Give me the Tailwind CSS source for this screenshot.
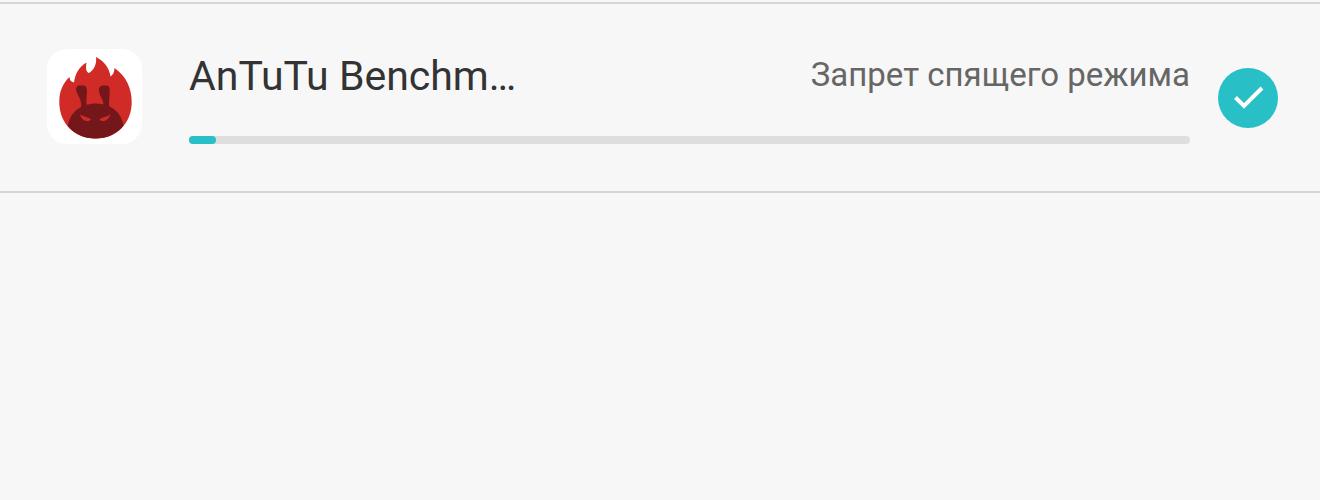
<!DOCTYPE html>
<html lang="ru">
<head>
    <meta charset="UTF-8">
    <meta name="viewport" content="width=device-width, initial-scale=1.0">
    <title>AnTuTu Benchmark</title>
    <script src="https://cdn.jsdelivr.net/npm/@tailwindcss/browser@4"></script>
</head>
<body class="min-h-screen bg-[#f7f7f7] pt-0.5 font-['Roboto',sans-serif]">
    <!-- App list -->
    <ul class="border-y-2 border-[#d6d6d6]">
        <li class="flex items-center pt-11 pb-[47px] pl-[47px] pr-[42px]">
            <!-- App icon -->
            <svg class="size-24 shrink-0" viewBox="0 0 96 96" aria-hidden="true">
                <rect y="1" width="95" height="95" rx="20" fill="#fff"/>
                <path fill="#d02b26" d="M48.500 90.500C27 90.500 12.300 75 12.300 54C12.300 43 16 35 22.500 29C22.500 32 24 34 27 34.500C28 26 32 19 39.500 14.500C38.500 20 39 24 42 25C47 22 50 16 49 9C57 13 62.500 20 63.500 28.500C66 27 67.500 24 67.500 20C79 28 84.700 40 84.700 54C84.700 75 70 90.500 48.500 90.500Z"/>
                <path fill="#74171b" d="M20.800 78C23 64 34 55.500 49 55.500C64 55.500 74 64 76.500 77.500C70 86 60 90.500 48.500 90.500C37 90.500 27.500 86 20.800 78Z"/>
                <path fill="#74171b" d="M29.300 43C28.500 39.500 30 37.500 33 37.500H36C39 37.500 40 39.500 40 43C39.500 49 39 54 40 60L34 60.500C35 52 31.500 49 29.300 43ZM62.700 43C63 39.500 62 37.500 59 37.500H56C53 37.500 51.500 40 52 43C52.500 49 57.500 52 56.500 60L62.500 61C61.500 54 62.500 49 62.700 43Z"/>
                <path fill="#d02b26" d="M33 66.500C37 69 42 69 44 71.500C41 74.500 35 73.500 33 66.500ZM63.500 66.500C59.500 69 55 69 52.500 71.500C55 74.500 61 73.500 63.500 66.500Z"/>
            </svg>

            <!-- Name, status and usage bar -->
            <div class="ml-[46px] flex min-w-0 flex-1 flex-col justify-between self-stretch">
                <div class="flex items-start justify-between">
                    <label for="antutu" class="text-[41px] leading-[56px] text-[#333]">AnTuTu Benchm…</label>
                    <span class="text-[33px] leading-[54px] text-[#666]">Запрет спящего режима</span>
                </div>
                <progress value="2.7" max="100" aria-label="AnTuTu Benchmark"
                    class="block h-2 w-full appearance-none [&::-webkit-progress-bar]:rounded-full [&::-webkit-progress-bar]:bg-[#dedede] [&::-webkit-progress-value]:rounded-full [&::-webkit-progress-value]:bg-[#29bfc7]"></progress>
            </div>

            <!-- Tick -->
            <div class="ml-7 grid shrink-0 pt-1">
                <input type="checkbox" id="antutu" checked
                    class="col-start-1 row-start-1 size-[60px] appearance-none rounded-full bg-gray-300 checked:bg-[#29bfc7]">
                <svg class="pointer-events-none col-start-1 row-start-1 size-[60px]" viewBox="0 0 60 60" fill="none" stroke="#fff" stroke-width="4" aria-hidden="true">
                    <path d="M17.500 29.500L26 38L44 20"/>
                </svg>
            </div>
        </li>
    </ul>
</body>
</html>
